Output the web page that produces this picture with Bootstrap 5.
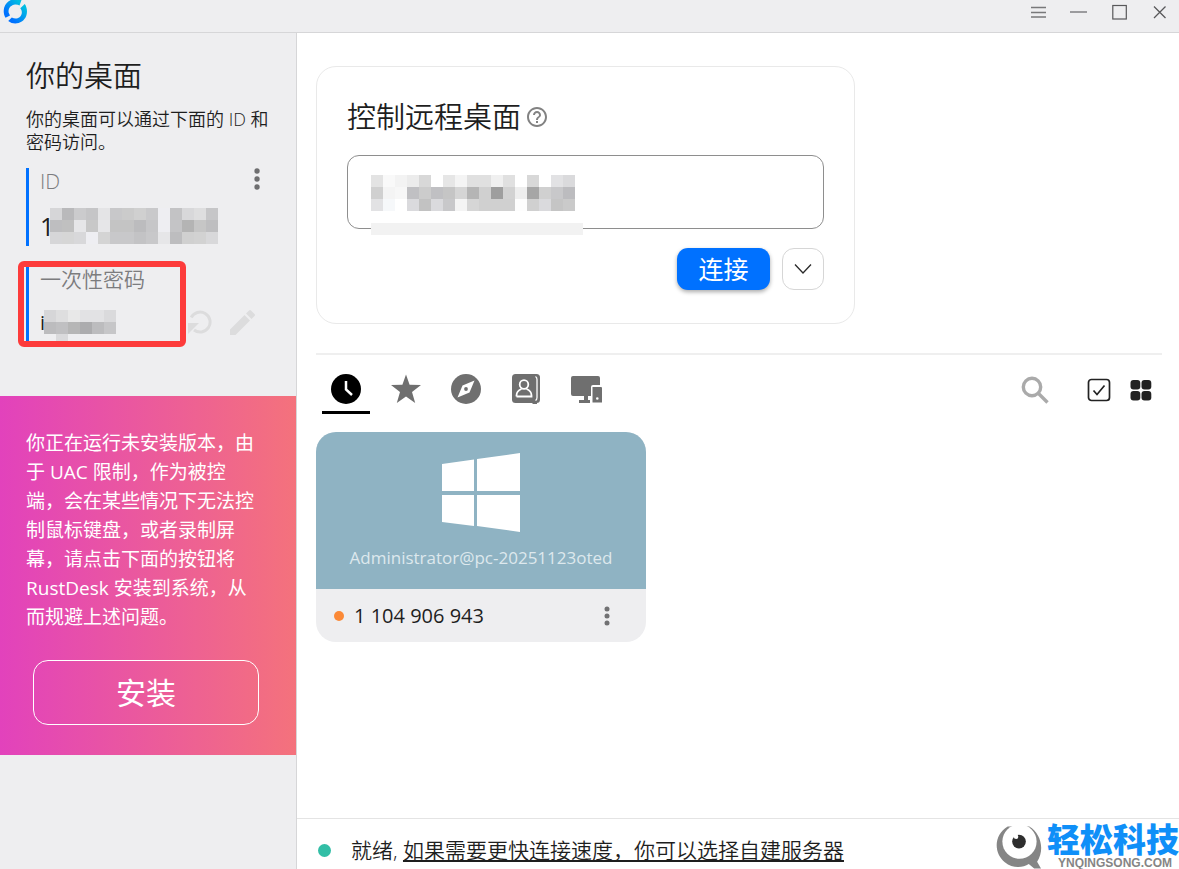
<!DOCTYPE html>
<html lang="zh-CN">
<head>
<meta charset="utf-8">
<meta name="viewport" content="width=device-width, initial-scale=1">
<title>RustDesk</title>
<link href="https://cdn.jsdelivr.net/npm/bootstrap@5.3.0/dist/css/bootstrap.min.css" rel="stylesheet">
<style>
  body { font-family: "Open Sans", "Noto Sans CJK SC", sans-serif; font-weight: 350; color: #1e1e1e; }
  svg { display: block; flex: none; }
  .btn { --bs-btn-padding-x: 0; --bs-btn-padding-y: 0; --bs-btn-border-width: 0px; line-height: 1; }

  .titlebar { height: 33px; background: #eeeef0; border-bottom: 1px solid #d6d6d8; padding: 0 11px 0 3px; }
  .window-tools { gap: 24px; }

  .sidebar { width: 297px; background: #eeeef0; border-right: 1px solid #d6d6d8; flex: none; }
  .sidebar-top { padding: 23px 24px 52px 26px; }
  .heading { font-size: 29px; line-height: 40px; font-weight: 350; }
  .desc { font-size: 18px; line-height: 23px; margin: 12px 0 14px; }
  .field { border-left: 3px solid #0071ff; height: 78px; padding-left: 11px; }
  .field-label { font-size: 21px; line-height: 26px; color: #7c7c7e; }
  .field-value { font-size: 25px; line-height: 36px; padding-top: 14px; font-weight: 400; }
  .pass-row { padding-top: 18px; padding-right: 15px; gap: 16px; }
  .field-pass { margin-top: 20px; position: relative; }
  .first-char { width: 10px; flex: none; }
  .first-char-sm { width: 4px; flex: none; font-size: 20px; line-height: 26px; font-weight: 400; }
  .marker { position: absolute; left: -11px; top: -5px; width: 168px; height: 86px; border: 6px solid #fd3b3b; border-radius: 6px; pointer-events: none; }

  .install { background: linear-gradient(90deg, #e242bc, #f4727c); color: #fff; padding: 33px 24px 30px 26px; font-weight: 400; }
  .install p { font-size: 19px; line-height: 29px; margin: 0 9px 28px 0; }
  .btn-install { height: 65px; margin: 0 13px 0 7px; border: 1px solid #fff; border-radius: 15px; color: #fff; font-size: 30px; }
  .btn-install:hover { color: #fff; background: #ffffff22; border-color: #fff; }

  .content { padding: 33px 17px 0 19px; }
  .connect { max-width: 539px; border: 1px solid #e9e9e9; border-radius: 20px; padding: 30px 30px 33px; }
  .remote-box { height: 74px; position: relative; margin: 18px 0 19px; }
  .remote-box .form-control { height: 100%; border: 1px solid #8e8e8e; border-radius: 12px; font-size: 25px; }
  .remote-mosaic { position: absolute; left: 24px; top: 20px; pointer-events: none; }
  .btn-connect { width: 93px; height: 42px; border-radius: 11px; background: #0071ff; color: #fff; font-size: 25px; font-weight: 400; box-shadow: 0 2px 4px #00000055; }
  .btn-more { width: 42px; height: 42px; border: 1px solid #d6d6d6; border-radius: 12px; }

  .tabs-line { border-top: 2px solid #efefef; margin-top: 29px; padding: 11px 10px 0 6px; }
  .tab-btn { width: 48px; height: 48px; border-bottom: 3px solid transparent; border-radius: 0; color: #6f6f6f; }
  .tab-btn.active { border-bottom-color: #000; color: #000; }

  .peer { width: 330px; margin-top: 18px; border-radius: 20px; background: #eeeef0; }
  .peer-top { height: 157px; background: #8fb3c3; padding-top: 21px; }
  .peer-name { font-size: 17px; line-height: 24px; color: #dde8ed; margin-top: 13px; font-weight: 400; }
  .peer-bottom { height: 53px; padding: 0 36px 0 18px; }
  .peer-id { font-size: 20px; font-weight: 400; margin-left: 10px; }
  .dot { width: 10px; height: 10px; border-radius: 50%; background: #fb8937; }

  .status { height: 51px; border-top: 1px solid #e4e4e4; padding: 12px 20px 0 21px; font-size: 21px; line-height: 38px; }
  .status .dot { width: 13px; height: 13px; background: #32bea6; margin-right: 20px; }
  .status a { color: inherit; text-underline-offset: 2px; }

  .brand { position: absolute; right: 0; bottom: 0; gap: 5px; color: #0f8ff8; }
  .brand-name { font-size: 33px; line-height: 36px; font-weight: 900; }
  .brand-url { font-family: "Liberation Sans", sans-serif; font-size: 12px; line-height: 11px; font-weight: 700; color: #858585; padding-right: 7px; }
</style>
</head>
<body class="d-flex flex-column vh-100 overflow-hidden position-relative">

<header class="titlebar d-flex justify-content-between flex-shrink-0">
  <svg width="25" height="25" viewBox="0 0 25 25" aria-label="RustDesk">
    <defs><linearGradient id="ring" x1="0" y1="1" x2="1" y2="0"><stop offset=".2" stop-color="#0071ff"/><stop offset=".85" stop-color="#00bde2"/></linearGradient></defs>
    <g fill="url(#ring)">
      <path d="M18.500 0C12 -3 3.500 0 1.200 7.500C.2 11.500.8 15 2.500 17.800L7 15.500L5.600 12.500C5.200 8.500 7.500 5.600 11 4.800C13 4.400 15 4.700 16.500 5.500Z"/>
      <path d="M21.800 4L17.300 8.300C19.700 11.300 19.200 15 16.500 17.200C14.300 19 11.500 19 8.800 17.600L5.200 21C11.500 26 20.500 23 23.200 16C24.800 11.500 23.800 7 21.800 4Z"/>
    </g>
  </svg>
  <div class="window-tools d-flex align-items-center pb-2">
    <button class="btn" aria-label="菜单"><svg width="16" height="16" viewBox="0 0 16 16" stroke="#78787a" stroke-width="1.300"><path d="M1 3.500h15M1 8.500h15M1 13h15"/></svg></button>
    <button class="btn" aria-label="最小化"><svg width="18" height="16" viewBox="0 0 18 16" stroke="#78787a" stroke-width="1.400"><path d="M0 8h17"/></svg></button>
    <button class="btn" aria-label="最大化"><svg width="16" height="16" viewBox="0 0 16 16" fill="none" stroke="#58585a" stroke-width="1.200"><rect x=".8" y="1.500" width="13.500" height="13.500"/></svg></button>
    <button class="btn" aria-label="关闭"><svg width="16" height="16" viewBox="0 0 16 16" stroke="#58585a" stroke-width="1.300"><path d="M2 2.500l11.500 11.500M13.500 2.500l-11.500 11.500"/></svg></button>
  </div>
</header>

<div class="d-flex flex-grow-1">
  <aside class="sidebar">
    <div class="sidebar-top">
      <h1 class="heading m-0">你的桌面</h1>
      <p class="desc">你的桌面可以通过下面的 ID 和密码访问。</p>
      <div class="field">
        <div class="d-flex justify-content-between align-items-start pe-2">
          <span class="field-label">ID</span>
          <button class="btn me-1" aria-label="更多"><svg width="8" height="22" viewBox="0 0 8 22" fill="#6e6e70"><circle cx="5" cy="3" r="2.700"/><circle cx="5" cy="11" r="2.700"/><circle cx="5" cy="19" r="2.700"/></svg></button>
        </div>
        <div class="field-value d-flex">
          <span class="first-char">1</span>
          <svg class="mosaic" data-cells="d6d6d8 b9b9bb cbcbcd c5c5c7 e4e4e6 c8c8ca cbcbcb d0d0d0 c9c9cb eeeef2 c3c3c5 d8d8da dededf c6c6c8/bebec0 c0c0c0 e6e6e8 c8c8c8 e6e6e8 c4c4c4 c4c4c4 bcbcbe c6c6c8 eeeef2 c4c4c6 b4b4b4 c6c6c6 bebec0/d6d6d8 d6d6d6 d8d8da eeeef2 d4d4d4 c8c8ca c8c8ca c3c3c5 c8c8ca e6e6e8 bdbdbf d0d0d0 d2d2d2 d8d8da"></svg>
        </div>
      </div>
      <div class="field field-pass">
        <div class="field-label">一次性密码</div>
        <div class="pass-row d-flex align-items-start">
          <div class="d-flex me-auto">
            <span class="first-char-sm">i</span>
            <svg class="mosaic" data-cells="d6d6d8 dededf e8e8e8 e2e2e4 e2e2e4 dadadc/bcbcbe c0c0c2 b6b6b6 acacae bcbcbe c6c6c8/eeeef0 dadadc eeeef0 eeeef0 eeeef0 eeeef0"></svg>
          </div>
          <button class="btn" aria-label="刷新"><svg width="28" height="26" viewBox="0 2 28 26" fill="none" stroke="#dcdcdd" stroke-width="3"><path d="M6.200 9.500A10 10 0 1 1 9 22"/><path d="M3 15h11L3 26z" fill="#dcdcdd" stroke="none"/></svg></button>
          <button class="btn" aria-label="编辑"><svg width="28" height="26" viewBox="0 2 28 26" fill="#dcdcdd"><path d="M1 21.500V27H6.500L21 12.500L15.500 7zM17 5.500L22.500 11L25.500 8Q26.500 7 25.500 6L22 2.500Q21 1.500 20 2.500z"/></svg></button>
        </div>
        <div class="marker"></div>
      </div>
    </div>
    <section class="install d-flex flex-column">
      <p>你正在运行未安装版本，由于 UAC 限制，作为被控端，会在某些情况下无法控制鼠标键盘，或者录制屏幕，请点击下面的按钮将 RustDesk 安装到系统，从而规避上述问题。</p>
      <button class="btn btn-install">安装</button>
    </section>
  </aside>

  <div class="flex-grow-1 d-flex flex-column">
    <main class="content flex-grow-1">
      <section class="connect">
        <div class="d-flex align-items-center gap-1">
          <label class="heading" for="remote">控制远程桌面</label>
          <svg width="24" height="24" viewBox="0 0 24 24" fill="#828282"><path d="M11 18h2v-2h-2v2zm1-16C6.480 2 2 6.480 2 12s4.480 10 10 10 10-4.480 10-10S17.520 2 12 2zm0 18c-4.410 0-8-3.590-8-8s3.590-8 8-8 8 3.590 8 8-3.590 8-8 8zm0-14c-2.210 0-4 1.790-4 4h2c0-1.100.9-2 2-2s2 .9 2 2c0 2-3 1.750-3 5h2c0-2.250 3-2.500 3-5 0-2.210-1.790-4-4-4z"/></svg>
        </div>
        <div class="remote-box">
          <input id="remote" class="form-control" type="text">
          <div class="remote-mosaic">
            <svg class="mosaic" data-cells="e3e3e3 f9f9f9 f3f3f3 ececec d8d8d8 ffffff e6e6e6 f4f4f4 e0e0e0 e0e0e0 f0f0f0 e0e0e0 ffffff d8d8d8 ffffff e2e2e4 dadadc/d0d0d0 f4f4f4 f7f7f7 c0c0c3 cccccc c0c0c3 c5c5c5 d5d5d5 b5b5b5 d0d0d0 9e9e9e d2d2d2 eeeeee a6a6a6 d0d0d0 c8c8ca bcbcbf/e2e2e4 f6f8fa ffffff dadadd c2c2c2 dadadd c8c8ca f4f4f4 d6d6d6 d0d0d0 d0d0d0 d0d0d0 fdfdfd d0d0d0 dadadd c5c5c5 cacaca"></svg>
            <svg class="mt-2 pt-1" width="212" height="16"><rect width="212" height="12" fill="#f2f2f2"/></svg>
          </div>
        </div>
        <div class="d-flex justify-content-end" style="gap:12px">
          <button class="btn btn-connect">连接</button>
          <button class="btn btn-more d-flex align-items-center justify-content-center" aria-label="更多连接方式"><svg width="18" height="12" viewBox="0 0 18 12" fill="none" stroke="#2a2a2a" stroke-width="1.300"><path d="M1 1.500l8 8.500 8-8.500"/></svg></button>
        </div>
      </section>

      <div class="tabs-line d-flex justify-content-between">
        <nav class="d-flex" style="gap:12px">
          <button class="btn tab-btn active d-flex align-items-center justify-content-center" aria-label="最近访问"><svg width="30" height="30" viewBox="0 0 30 30"><circle cx="15" cy="15" r="15" fill="currentColor"/><path d="M15 7v8.500l6 5.500" fill="none" stroke="#fff" stroke-width="2.500"/></svg></button>
          <button class="btn tab-btn d-flex align-items-center justify-content-center" aria-label="收藏"><svg width="30" height="30" viewBox="0 0 30 30" fill="currentColor"><path d="M15 .5l3.600 10.200 11.400.3-9 7 3.200 11L15 22.500 5.800 29 9 18 0 11l11.400-.3z"/></svg></button>
          <button class="btn tab-btn d-flex align-items-center justify-content-center" aria-label="已发现"><svg width="30" height="30" viewBox="0 0 30 30"><circle cx="15" cy="15" r="15" fill="currentColor"/><path d="M23.500 6.500L18.500 18.500 6.500 23.500 11.500 11.500z" fill="#fff"/><circle cx="15" cy="15" r="1.900" fill="currentColor"/></svg></button>
          <button class="btn tab-btn d-flex align-items-center justify-content-center" aria-label="地址簿"><svg width="28" height="30" viewBox="0 0 28 30"><rect width="28" height="29" rx="3.500" fill="currentColor"/><path d="M20 29h5v1h-4z" fill="currentColor"/><path d="M23.500 2.500Q25 3.500 25 5.500v18q0 2-1.500 3" fill="none" stroke="#fff" stroke-width="1.300"/><g fill="none" stroke="#fff" stroke-width="1.800"><circle cx="12" cy="10.500" r="4.300"/><path d="M4.500 22.500v-1q0-4.500 5-6.500M14.500 15q5 2 5 6.500v1H4.500"/></g></svg></button>
          <button class="btn tab-btn d-flex align-items-center justify-content-center" aria-label="我的设备"><svg width="31" height="28" viewBox="0 0 31 28" fill="currentColor"><path d="M2 1h25q2 0 2 2v7h-7q-2 0-2 2v9h-3v4h2v3H8v-3h5v-4H2q-2 0-2-2V3q0-2 2-2z"/><path fill-rule="evenodd" d="M21.500 12h8.500q1 0 1 1v14.500h-9.500zM25 23.500a1.300 1.300 0 1 0 2.600 0 1.300 1.300 0 1 0-2.600 0"/></svg></button>
        </nav>
        <div class="d-flex align-items-center">
          <button class="btn" aria-label="搜索"><svg width="28" height="28" viewBox="0 0 28 28" fill="none" stroke="#aaa" stroke-width="3.400"><circle cx="11" cy="11" r="8.700"/><path d="M17 17l9.500 9.500"/></svg></button>
          <button class="btn" style="margin-left:38px" aria-label="选择"><svg width="24" height="24" viewBox="0 0 24 24" fill="none" stroke="#222" stroke-width="1.700"><rect x="1.500" y="1.500" width="21" height="21" rx="3"/><path d="M6.500 12.500l3.500 4 7.500-9"/></svg></button>
          <button class="btn" style="margin-left:19px" aria-label="网格视图"><svg width="22" height="22" viewBox="0 0 22 22" fill="#222"><rect x=".5" y="1" width="9.800" height="9.500" rx="3"/><rect x="11.500" y="1" width="9.800" height="9.500" rx="3"/><rect x=".5" y="12" width="9.800" height="9.500" rx="3"/><rect x="11.500" y="12" width="9.800" height="9.500" rx="3"/></svg></button>
        </div>
      </div>

      <article class="peer overflow-hidden">
        <div class="peer-top d-flex flex-column align-items-center">
          <svg width="80" height="80" viewBox="0 0 80 80" fill="#fff"><path d="M1 11l32-4.500V38H1zM36 6l43-6v38H36zM1 42h32v31L1 69zM36 42h43v37l-43-6z"/></svg>
          <div class="peer-name">Administrator@pc-20251123oted</div>
        </div>
        <div class="peer-bottom d-flex align-items-center">
          <span class="dot"></span>
          <span class="peer-id">1 104 906 943</span>
          <button class="btn ms-auto" aria-label="更多"><svg width="6" height="20" viewBox="0 0 6 20" fill="#717173"><circle cx="3" cy="3" r="2.500"/><circle cx="3" cy="10" r="2.500"/><circle cx="3" cy="17" r="2.500"/></svg></button>
        </div>
      </article>
    </main>

    <footer class="status d-flex align-items-center">
      <span class="dot flex-shrink-0"></span>
      <div>就绪, <a href="#">如果需要更快连接速度，你可以选择自建服务器</a></div>
    </footer>
  </div>
</div>

<div class="brand d-flex align-items-end">
  <svg width="46" height="45" viewBox="0 0 47 45"><path d="M12 2C-2 10-3 29 9 38.500c8 6.500 18 6 24.500 2L39 45h7l-4-7c8-12 4-29-8-36z" fill="#858585"/><circle cx="24" cy="17.500" r="17.500" fill="#fff"/><circle cx="23.500" cy="17.500" r="7" fill="#2e2e2e"/><circle cx="20.500" cy="12.500" r="2.300" fill="#fff"/></svg>
  <div class="d-flex flex-column align-items-end">
    <div class="brand-name">轻松科技</div>
    <div class="brand-url">YNQINGSONG.COM</div>
  </div>
</div>

<script src="https://cdn.jsdelivr.net/npm/bootstrap@5.3.0/dist/js/bootstrap.bundle.min.js"></script>
<script>
  // Draws the pixelated covers over private values: one 12px square per colour.
  document.querySelectorAll('.mosaic').forEach(function (svg) {
    var rows = svg.dataset.cells.split('/').map(function (r) { return r.split(' '); });
    svg.setAttribute('width', rows[0].length * 12);
    svg.setAttribute('height', rows.length * 12);
    svg.innerHTML = rows.map(function (row, y) {
      return row.map(function (c, x) {
        return '<rect x="' + x * 12 + '" y="' + y * 12 + '" width="12" height="12" fill="#' + c + '"/>';
      }).join('');
    }).join('');
  });
</script>
</body>
</html>
